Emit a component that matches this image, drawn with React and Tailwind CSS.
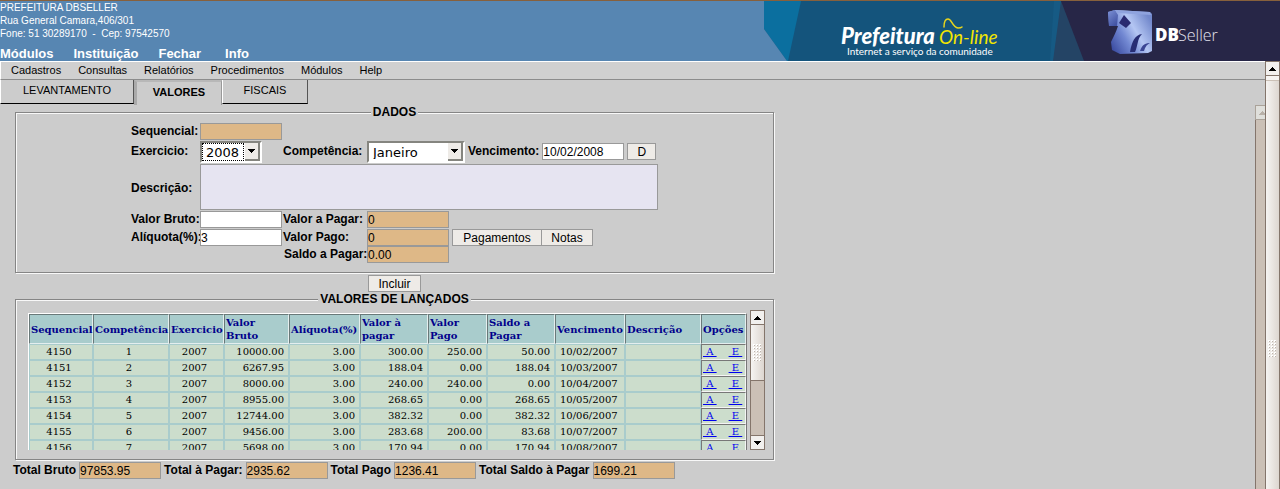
const rows = [
  ["4150", "1", "2007", "10000.00", "3.00", "300.00", "250.00", "50.00", "10/02/2007"],
  ["4151", "2", "2007", "6267.95", "3.00", "188.04", "0.00", "188.04", "10/03/2007"],
  ["4152", "3", "2007", "8000.00", "3.00", "240.00", "240.00", "0.00", "10/04/2007"],
  ["4153", "4", "2007", "8955.00", "3.00", "268.65", "0.00", "268.65", "10/05/2007"],
  ["4154", "5", "2007", "12744.00", "3.00", "382.32", "0.00", "382.32", "10/06/2007"],
  ["4155", "6", "2007", "9456.00", "3.00", "283.68", "200.00", "83.68", "10/07/2007"],
  ["4156", "7", "2007", "5698.00", "3.00", "170.94", "0.00", "170.94", "10/08/2007"],
];

const headers = [
  ["Sequencial", "w-[64px]"],
  ["Competência", "w-[76px]"],
  ["Exercicio", "w-[55px]"],
  ["Valor Bruto", "w-[65px]"],
  ["Alíquota(%)", "w-[71px]"],
  ["Valor à pagar", "w-[68px]"],
  ["Valor Pago", "w-[59px]"],
  ["Saldo a Pagar", "w-[68px]"],
  ["Vencimento", "w-[70px]"],
  ["Descrição", "w-[76px]"],
  ["Opções", "w-[45px]"],
];

const aligns = [
  "text-center pr-1",
  "text-center pr-1",
  "text-center pr-1",
  "text-right pr-1",
  "text-right pr-1",
  "text-right pr-1",
  "text-right pr-1",
  "text-right pr-1",
  "text-left pl-1",
];

const totals = [
  ["total-bruto", "Total Bruto", "97853.95"],
  ["total-pagar", "Total à Pagar:", "2935.62"],
  ["total-pago", "Total Pago", "1236.41"],
  ["total-saldo", "Total Saldo à Pagar", "1699.21"],
];

function Field({ tone = "bg-white", ...props }) {
  return (
    <input
      type="text"
      className={`block h-[17px] w-[82px] shrink-0 border border-[#999999] pt-px text-xs leading-none text-black outline-none ${tone}`}
      {...props}
    />
  );
}

function Label({ children, ...props }) {
  return (
    <label className="block h-4 whitespace-nowrap text-xs leading-4 font-bold" {...props}>
      {children}
    </label>
  );
}

function Button({ children, className }) {
  return (
    <button
      type="button"
      className={`h-[17px] border border-[#999999] bg-[#eeebe7] pt-px text-xs leading-none ${className}`}
    >
      {children}
    </button>
  );
}

function Select({ id, options, width, focused }) {
  return (
    <div
      className={`relative h-[22px] border-2 border-t-[#85857f] border-r-white border-b-white border-l-[#85857f] bg-white ${width}`}
    >
      <select
        id={id}
        className="block h-full w-full appearance-none pl-1 font-['DejaVu_Sans',sans-serif] text-[13px] leading-none outline-none"
      >
        {options.map((o) => (
          <option key={o}>{o}</option>
        ))}
      </select>
      {focused && (
        <span className="pointer-events-none absolute top-0 right-4 bottom-0 left-0 border border-dotted border-black" />
      )}
      <span className="pointer-events-none absolute top-0 right-0 bottom-0 flex w-[15px] items-center justify-center border-r-2 border-b-2 border-[#85857f] bg-[#eeebe7]">
        <svg width="7" height="4" viewBox="0 0 7 4" shapeRendering="crispEdges">
          <path d="M0 0h7v1h-1v1h-1v1h-1v1h-1v-1h-1v-1h-1v-1h-1z" fill="#000" />
        </svg>
      </span>
    </div>
  );
}

function ArrowButton({ down, disabled, label }) {
  return (
    <button
      type="button"
      aria-label={label}
      disabled={disabled}
      className={`flex h-[15px] w-[15px] shrink-0 items-center justify-center border ${
        disabled ? "border-[#aaa299] bg-[#dfdfdb]" : "border-[#84756b] bg-[#f2f0ee]"
      }`}
    >
      <svg width="7" height="4" viewBox="0 0 7 4" shapeRendering="crispEdges" className={down ? "rotate-180" : ""}>
        <path d="M0 4h7v-1h-1v-1h-1v-1h-1v-1h-1v1h-1v1h-1v1h-1z" fill={disabled ? "#b8b0a8" : "#000"} />
      </svg>
    </button>
  );
}

function Grip({ lines }) {
  return (
    <svg width="9" height={lines * 3} viewBox={`0 0 9 ${lines * 3}`} shapeRendering="crispEdges">
      {Array.from({ length: lines * 3 }, (_, i) => {
        const x = (i % 3) * 3;
        const y = Math.floor(i / 3) * 3;
        return (
          <g key={i}>
            <rect x={x} y={y} width="2" height="2" fill="#fff" />
            <rect x={x + 1} y={y + 1} width="1" height="1" fill="#bdb4ac" />
          </g>
        );
      })}
    </svg>
  );
}

function CityLogo() {
  return (
    <svg width="516" height="60" viewBox="0 0 516 60" className="block shrink-0">
      <defs>
        <linearGradient id="nub" x1="0" y1="0" x2="0.6" y2="1">
          <stop offset="0" stopColor="#7d92d6" />
          <stop offset="1" stopColor="#4354a4" />
        </linearGradient>
        <linearGradient id="body" x1="0" y1="0.9" x2="1" y2="0.3">
          <stop offset="0" stopColor="#2f3f96" />
          <stop offset="0.4" stopColor="#7288d2" />
          <stop offset="0.65" stopColor="#b4c6f3" />
          <stop offset="1" stopColor="#7389cc" />
        </linearGradient>
      </defs>
      <rect width="516" height="60" fill="#14547c" />
      <path d="M0 0h37L24 60H23L0 28z" fill="#0b6f9f" />
      <path d="M0 28L23 60H0z" fill="#5786b2" />
      <path d="M290 0h10v60h-14z" fill="#165a84" />
      <path d="M297 0h30v60h-38z" fill="#244465" />
      <path d="M297 0h219v60H320z" fill="#272647" />
      <text x="77" y="43" fontFamily="Lato, sans-serif" fontSize="22" fontWeight="900" fontStyle="italic" fill="#fff">
        Prefeitura
      </text>
      <text x="175" y="43" fontFamily="Lato, sans-serif" fontSize="19" fontStyle="italic" fill="#f3e600">
        On-line
      </text>
      <path
        d="M180 26C180 20 182 18 184 18C188 18 188 26 194 27C196 27 197 27 198 26"
        fill="none"
        stroke="#e9d51c"
        strokeWidth="1.5"
        strokeLinecap="round"
      />
      <text x="83" y="54" fontFamily="Lato, sans-serif" fontSize="10" fill="#fff">
        Internet a serviço da comunidade
      </text>
      <path
        d="M351 9L386 11L388 13L388 50L384 52L356 53L348 49L347 41C350 35 352 31 354 25L345 25L344 11Z"
        fill="url(#body)"
      />
      <path d="M344 11L351 9L354 14L353 25L345 25z" fill="url(#nub)" />
      <path d="M351 9L386 11L387 14L353 12z" fill="#8fa3de" />
      <path d="M360 14l7 8l-5 5l-7-5z" fill="#2a2a70" />
      <path d="M366 51C368 40 371 34 378 33C373 38 374 45 371 51z" fill="#272d74" />
      <path d="M376 50C378 44 381 42 386 42C382 44 381 47 380 50z" fill="#3b4694" />
      <text x="391" y="40" fontFamily="'Open Sans', sans-serif" fontSize="17" fontWeight="800" fill="#fff">
        DB
      </text>
      <text x="414" y="40" fontFamily="'Open Sans', sans-serif" fontSize="16" fontWeight="300" fill="#e3e3ee">
        Seller
      </text>
    </svg>
  );
}

function Fieldset({ title, children }) {
  return (
    <fieldset className="w-full border border-[#858585] pb-[9px] shadow-[inset_1px_1px_0_#f8f8f8,1px_1px_0_#f8f8f8]">
      <legend className="mx-auto h-[14px] bg-[#cccccc] px-[2px] text-xs leading-[14px] font-bold">{title}</legend>
      {children}
    </fieldset>
  );
}

export default function App() {
  return (
    <div className="flex min-h-screen flex-col bg-[#cccccc] font-['Liberation_Sans',Arial,sans-serif] text-black">
      <header className="flex justify-between border-t border-[#87603c] bg-[#5786b2] text-white">
        <div className="flex flex-col justify-between text-[10px] leading-[13px]">
          <address className="whitespace-pre not-italic">
            <p>PREFEITURA DBSELLER</p>
            <p>Rua General Camara,406/301</p>
            <p>Fone: 51 30289170  -  Cep: 97542570</p>
          </address>
          <nav className="flex gap-5 text-[13px] leading-[14px] font-bold">
            <a href="#modulos">Módulos</a>
            <a href="#instituicao">Instituição</a>
            <a href="#fechar">Fechar</a>
            <a href="#info" className="pl-1">Info</a>
          </nav>
        </div>
        <CityLogo />
      </header>

      <div className="flex flex-1">
        <div className="flex min-w-0 flex-1 flex-col">
          <nav className="flex h-[19px] gap-[17px] border-t border-b border-l border-t-white border-b-[#8c8c8c] border-l-white bg-[#d0d0d0] pl-[10px] text-[11px] leading-[17px]">
            <a href="#cadastros">Cadastros</a>
            <a href="#consultas">Consultas</a>
            <a href="#relatorios">Relatórios</a>
            <a href="#procedimentos">Procedimentos</a>
            <a href="#menu-modulos">Módulos</a>
            <a href="#help">Help</a>
          </nav>

          <div role="tablist" className="flex h-[25px] text-[11px] leading-5">
            <button
              role="tab"
              aria-selected="false"
              className="h-6 w-[134px] border-r border-b border-l border-r-[#555555] border-b-black border-l-white pb-1"
            >
              LEVANTAMENTO
            </button>
            <button
              role="tab"
              aria-selected="true"
              className="h-[25px] w-[88px] border-t-2 border-r border-l-[3px] border-t-[#b8b8b8] border-r-[#999999] border-l-[#aaaaaa] pb-1 font-bold"
            >
              VALORES
            </button>
            <button
              role="tab"
              aria-selected="false"
              className="h-6 w-[86px] border-r border-b border-l border-r-[#555555] border-b-black border-l-white pb-1"
            >
              FISCAIS
            </button>
          </div>

          <div className="flex flex-1">
            <main className="min-w-0 flex-1">
              <div className="ml-[15px] flex max-w-[759px] flex-col items-center">
                <Fieldset title="DADOS">
                  <div className="grid grid-cols-[69px_83px_84px_82px_auto] justify-start pt-1 pl-[115px]">
                    <Label htmlFor="sequencial">Sequencial:</Label>
                    <div className="col-span-4 h-[18px]">
                      <Field id="sequencial" tone="bg-[#deb887]" readOnly />
                    </div>

                    <div className="pt-[2px]">
                      <Label htmlFor="exercicio">Exercicio:</Label>
                    </div>
                    <Select id="exercicio" options={["2008", "2007"]} width="w-[62px]" focused />
                    <div className="pt-[2px]">
                      <Label htmlFor="competencia">Competência:</Label>
                    </div>
                    <div className="col-span-2 flex h-[23px] gap-[3px]">
                      <Select id="competencia" options={["Janeiro", "Fevereiro"]} width="w-[98px]" />
                      <div className="flex gap-[3px] pt-[2px]">
                        <Label htmlFor="vencimento">Vencimento:</Label>
                        <Field id="vencimento" defaultValue="10/02/2008" />
                        <Button className="w-[29px]">D</Button>
                      </div>
                    </div>

                    <div className="self-center">
                      <Label htmlFor="descricao">Descrição:</Label>
                    </div>
                    <div className="col-span-4 h-[47px]">
                      <textarea
                        id="descricao"
                        className="block h-[46px] w-[458px] resize-none border border-[#999999] bg-[#e6e4f1] text-xs outline-none"
                      />
                    </div>

                    <Label htmlFor="valor-bruto">Valor Bruto:</Label>
                    <Field id="valor-bruto" />
                    <Label htmlFor="valor-pagar">Valor a Pagar:</Label>
                    <div className="col-span-2 h-[18px]">
                      <Field id="valor-pagar" tone="bg-[#deb887]" defaultValue="0" readOnly />
                    </div>

                    <Label htmlFor="aliquota">Alíquota(%):</Label>
                    <Field id="aliquota" defaultValue="3" />
                    <Label htmlFor="valor-pago">Valor Pago:</Label>
                    <Field id="valor-pago" tone="bg-[#deb887]" defaultValue="0" readOnly />
                    <div className="flex pl-[3px]">
                      <Button className="w-[90px]">Pagamentos</Button>
                      <Button className="-ml-px w-[52px]">Notas</Button>
                    </div>

                    <div className="col-start-3 pl-px">
                      <Label htmlFor="saldo">Saldo a Pagar:</Label>
                    </div>
                    <Field id="saldo" tone="bg-[#deb887]" defaultValue="0.00" readOnly />
                  </div>
                </Fieldset>

                <div className="pt-[2px]">
                  <Button className="block w-[53px]">Incluir</Button>
                </div>

                <Fieldset title="VALORES DE LANÇADOS">
                  <div className="flex h-[144px] pt-1 pr-2 pl-3">
                    <div className="min-w-0 flex-1 overflow-hidden pt-[3px]">
                      <table className="w-[719px] table-fixed border-separate border-spacing-0 border border-t-white border-r-[#777777] border-l-white bg-[#a9cccc] font-['DejaVu_Serif',serif] text-[10px]">
                        <thead>
                          <tr className="h-[30px]">
                            {headers.map(([name, width]) => (
                              <th
                                key={name}
                                className={`border border-t-[#697979] border-r-[#e4eeee] border-b-[#e4eeee] border-l-[#697979] px-px text-left leading-[13px] text-[#00008b] ${width}`}
                              >
                                {name}
                              </th>
                            ))}
                          </tr>
                        </thead>
                        <tbody>
                          {rows.map((row) => (
                            <tr key={row[0]} className="h-4">
                              {row.map((value, i) => (
                                <td
                                  key={i}
                                  className={`border border-[#a9cccc] bg-[#ccddcc] leading-[14px] ${aligns[i]}`}
                                >
                                  {value}
                                </td>
                              ))}
                              <td className="border border-[#a9cccc] bg-[#ccddcc]" />
                              <td className="border border-t-[#777777] border-r-[#f4f4f4] border-b-[#f4f4f4] border-l-[#777777] bg-[#ccddcc] px-px leading-[14px]">
                                <div className="flex gap-3 whitespace-pre text-[#0000ee]">
                                  <a href="#alterar" className="underline"> A </a>
                                  <a href="#excluir" className="underline"> E </a>
                                </div>
                              </td>
                            </tr>
                          ))}
                        </tbody>
                      </table>
                    </div>
                    <div className="flex w-[15px] shrink-0 flex-col bg-[#cbc0b6]">
                      <ArrowButton label="Rolar para cima" />
                      <div className="flex h-14 items-center justify-center border-x border-b border-[#84756b] bg-linear-to-r from-[#f6f4f2] to-[#ddd6d0]">
                        <Grip lines={6} />
                      </div>
                      <div className="flex-1 border-x border-[#84756b]" />
                      <ArrowButton label="Rolar para baixo" down />
                    </div>
                  </div>
                </Fieldset>
              </div>

              <div className="flex gap-[3px] pt-[2px] pl-[13px]">
                {totals.map(([id, name, value]) => (
                  <div key={id} className="flex gap-[3px]">
                    <Label htmlFor={id}>{name}</Label>
                    <Field id={id} tone="bg-[#deb887]" defaultValue={value} readOnly />
                  </div>
                ))}
              </div>
            </main>

            <div className="flex w-[10px] shrink-0 flex-col overflow-hidden bg-[#cbc0b6]">
              <ArrowButton label="Rolar conteúdo para cima" disabled />
              <div className="flex-1 border-l border-[#84756b]" />
            </div>
          </div>
        </div>

        <div className="flex w-[15px] shrink-0 flex-col">
          <ArrowButton label="Rolar página para cima" />
          <div className="flex flex-1 flex-col items-center border-x border-[#84756b] bg-linear-to-r from-[#f6f4f2] to-[#ddd6d0]">
            <div className="h-[5px] w-full border-b border-[#cbc0b6] bg-[#f6f4f2]" />
            <div className="flex flex-1 items-center pt-32">
              <Grip lines={6} />
            </div>
          </div>
        </div>
      </div>
    </div>
  );
}
